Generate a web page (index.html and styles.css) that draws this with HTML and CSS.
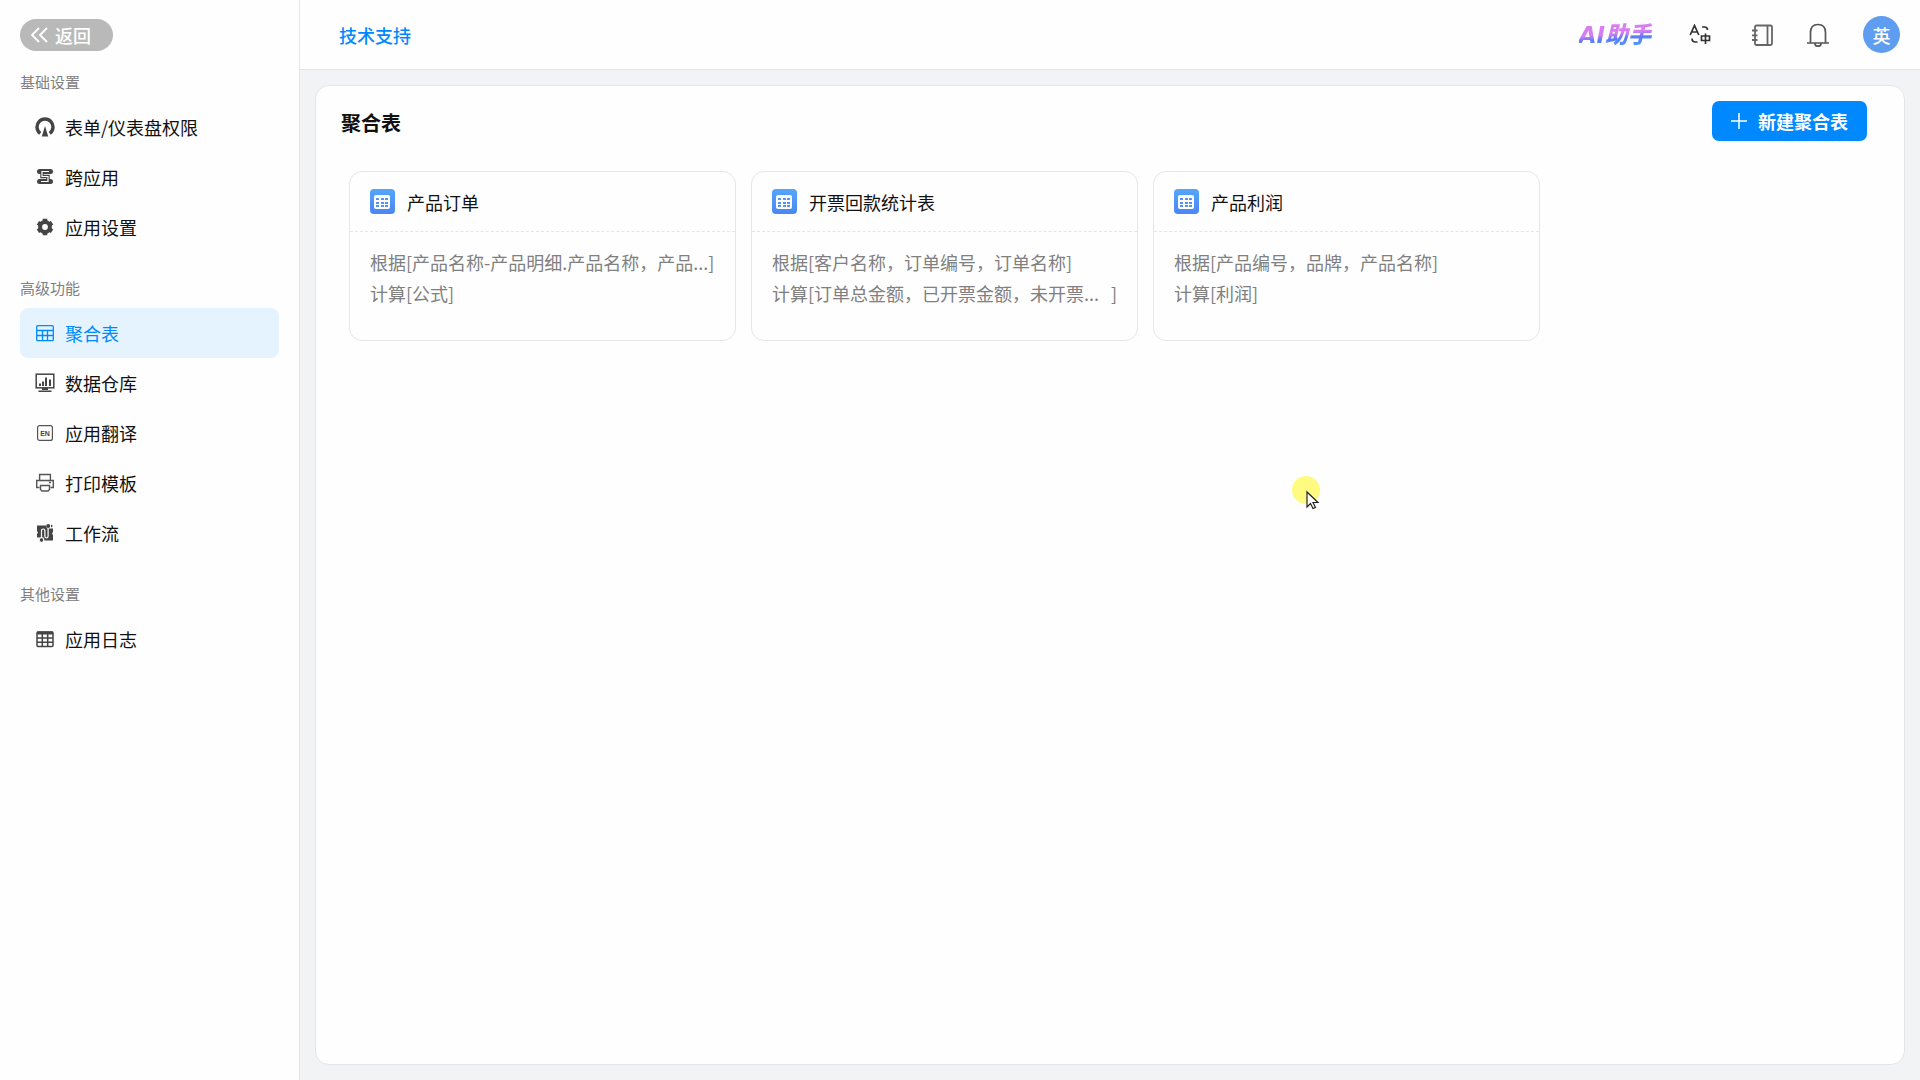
FILE: index.html
```html
<!DOCTYPE html>
<html lang="zh-CN">
<head>
  <meta charset="UTF-8">
  <title>聚合表</title>
  <meta name="viewport" content="width=device-width, initial-scale=1.0" />
  <link rel="stylesheet" href="styles.css">
</head>
<body>
  <!-- shared table icon for the cards -->
  <svg class="defs" width="0" height="0">
    <defs>
      <linearGradient id="blue" x1="0" y1="0" x2="0" y2="1">
        <stop offset="0" stop-color="#54a6fb" />
        <stop offset="1" stop-color="#4a86f5" />
      </linearGradient>
      <symbol id="tableIcon" viewBox="0 0 25 25">
        <rect width="25" height="25" rx="4" fill="url(#blue)" />
        <rect x="4" y="6" width="16" height="14" rx="2" fill="#fff" />
        <path d="M6 9h3v2H6zM11 9h3v2h-3zM15 9h3v2h-3zM6 13h3v2H6zM11 13h3v2h-3zM15 13h3v2h-3zM6 16h3v2H6zM11 16h3v2h-3zM15 16h3v2h-3z" fill="#4f96f8" />
      </symbol>
    </defs>
  </svg>

  <aside class="sidebar">
    <button class="back" type="button">
      <svg width="17" height="16" viewBox="0 0 17 16" fill="none" stroke="#fff" stroke-width="1.8"><path d="M8 1L1 8l7 7M16 1L9 8l7 7" /></svg>
      返回
    </button>

    <nav>
      <h2>基础设置</h2>
      <a class="item" href="#">
        <svg width="20" height="20" viewBox="0 0 20 20"><path d="M5.2 16.4A8 8 0 1 1 14.8 16.4" fill="none" stroke="#444" stroke-width="3.4" /><path d="M10 9l3.2 10.500H6.800z" fill="#444" /></svg>
        表单/仪表盘权限
      </a>
      <a class="item" href="#">
        <svg width="20" height="20" viewBox="0 0 20 20" fill="none"><path d="M4.500 4.500h11M4.500 14.500h11" stroke="#444" stroke-width="5" stroke-linecap="round" /><path d="M7 4.500v5h6v5" stroke="#444" stroke-width="3.500" /><path d="M14 4.500H7v5h6v5H6" stroke="#fff" stroke-width="1.200" /></svg>
        跨应用
      </a>
      <a class="item" href="#">
        <svg width="20" height="20" viewBox="0 0 20 20"><circle cx="10" cy="10" r="4.900" fill="none" stroke="#444" stroke-width="4" /><path d="M10 1.800v3M10 15.200v3M2.900 5.900l2.600 1.500M14.500 12.600l2.600 1.500M2.900 14.100l2.600-1.500M14.500 7.400l2.600-1.500" stroke="#444" stroke-width="4.500" /></svg>
        应用设置
      </a>

      <h2>高级功能</h2>
      <a class="item active" href="#">
        <svg width="20" height="20" viewBox="0 0 20 20" fill="none" stroke="#0089ff" stroke-width="1.300"><rect x="1.700" y="2.700" width="16.600" height="15" rx="1" /><path d="M2 7.500h16M2 12.500h16M7.500 7.500v10M12.500 7.500v10" /></svg>
        聚合表
      </a>
      <a class="item" href="#">
        <svg width="20" height="20" viewBox="0 0 20 20" fill="#444"><rect x="1.200" y="1.200" width="17.600" height="13.600" fill="none" stroke="#444" stroke-width="1.500" /><path d="M4 10.500h2V13H4zM7 8.500h2V13H7zM10 4.500h2V13h-2zM14 6.500h2V13h-2zM7 15h6v2H7zM3.500 17.500h13V19h-13z" /></svg>
        数据仓库
      </a>
      <a class="item" href="#">
        <svg width="20" height="20" viewBox="0 0 20 20"><rect x="2.600" y="2.600" width="14.800" height="14.800" rx="2" fill="none" stroke="#555" stroke-width="1.200" /><text class="en" x="10" y="13" text-anchor="middle">EN</text></svg>
        应用翻译
      </a>
      <a class="item" href="#">
        <svg width="20" height="20" viewBox="0 0 20 20" fill="none" stroke="#555" stroke-width="1.400"><path d="M4.600 7.500v-6h10.800v6M4.500 14.500H1.700v-7h16.600v7h-2.800M14 9.500h2" /><path d="M5.500 12.500h9v4l-1.500 1.500H7l-1.500-1.500z" /></svg>
        打印模板
      </a>
      <a class="item" href="#">
        <svg width="20" height="20" viewBox="0 0 20 20"><path d="M2 2.500h9l1 3h6v3.500l-1 1.500 1 1.500v5.500H9.500l-1-3H2V11l1-1.500L2 8z" fill="#444" /><path d="M6.500 15V8q0-2 1.700-2t1.700 2v5q0 2 1.600 2t1.600-2V5" fill="none" stroke="#fff" stroke-width="1.200" /><circle cx="13.200" cy="3" r="2" fill="#444" /><path d="M16 1.500l2 1.500-2 1.500z" fill="#444" /><circle cx="6.500" cy="17" r="2.300" fill="#444" stroke="#fff" /></svg>
        工作流
      </a>

      <h2>其他设置</h2>
      <a class="item" href="#">
        <svg width="20" height="20" viewBox="0 0 20 20" fill="none" stroke="#444" stroke-width="1.500"><rect x="2" y="3" width="16" height="14.500" rx="1" /><path d="M2 4h16" stroke-width="3" /><path d="M2 9h16M2 13.200h16M7.300 5v12M12.700 5v12" /></svg>
        应用日志
      </a>
    </nav>
  </aside>

  <div class="main">
    <header class="topbar">
      <a class="support" href="#">技术支持</a>
      <div class="tools">
        <a class="ai" href="#">AI助手</a>
        <button class="tool lang" type="button" aria-label="切换语言">
          <svg width="22" height="22" viewBox="0 0 22 22" fill="none" stroke="#333" stroke-width="1.700"><path d="M1.200 11L5.500 1.500 9.800 11M3 8h5M13 3h2.500q3 0 3 3M3 14.500q0 3.500 3.500 3.500h2M12.500 12h8v4.500h-8zM16.500 9.500V20" /></svg>
        </button>
        <button class="tool book" type="button" aria-label="通讯录">
          <svg width="22" height="22" viewBox="0 0 22 22" fill="none" stroke="#666" stroke-width="1.800"><rect x="4" y="1.500" width="17" height="19.500" rx="1.500" /><path d="M16.500 1.500V21M1 6.500h5.500M1 11.300h5.500M1 16h5.500" /></svg>
        </button>
        <button class="tool bell" type="button" aria-label="消息">
          <svg width="24" height="24" viewBox="0 0 24 24" fill="none" stroke="#555" stroke-width="1.700"><path d="M4.500 20V9.500Q4.500 1.500 12 1.500t7.500 8V20M1 20h22M9 20.500q0 2.700 3 2.700t3-2.700" /></svg>
        </button>
        <button class="avatar" type="button">英</button>
      </div>
    </header>

    <main class="panel">
      <div class="panel-head">
        <h1>聚合表</h1>
        <button class="create" type="button">
          <svg width="16" height="16" viewBox="0 0 16 16" stroke="#fff" stroke-width="1.500"><path d="M8 0v16M0 8h16" /></svg>
          新建聚合表
        </button>
      </div>

      <div class="cards">
        <section class="card">
          <h3><svg width="25" height="25"><use href="#tableIcon" /></svg>产品订单</h3>
          <p>根据[产品名称-产品明细.产品名称，产品...]</p>
          <p>计算[公式]</p>
        </section>
        <section class="card">
          <h3><svg width="25" height="25"><use href="#tableIcon" /></svg>开票回款统计表</h3>
          <p>根据[客户名称，订单编号，订单名称]</p>
          <p>计算[订单总金额，已开票金额，未开票...<span class="end">]</span></p>
        </section>
        <section class="card">
          <h3><svg width="25" height="25"><use href="#tableIcon" /></svg>产品利润</h3>
          <p>根据[产品编号，品牌，产品名称]</p>
          <p>计算[利润]</p>
        </section>
      </div>
    </main>
  </div>

  <!-- mouse pointer with highlight -->
  <svg class="pointer" width="32" height="36" viewBox="0 0 32 36">
    <circle cx="14" cy="14" r="14" fill="#fffa80" />
    <path d="M15 16v15l3.500-3.500 2.500 5 2.500-1-2.500-5h5z" fill="#fff" stroke="#222" stroke-width="1.200" />
  </svg>
</body>
</html>
```
FILE: styles.css
```css
* { box-sizing: border-box; }
body { margin: 0; display: flex; min-height: 100vh; background: #f1f3f5; color: #111; font-family: "Noto Sans CJK SC", sans-serif; font-size: 18px; }
a { color: inherit; text-decoration: none; }
button { border: 0; padding: 0; font: inherit; color: #fff; cursor: pointer; }
svg { flex: none; }
h1, h2, h3, p { margin: 0; }
.defs { position: absolute; }

/* left menu */
.sidebar { flex: none; width: 300px; padding: 19px 20px; background: #fefefe; border-right: 1px solid #e3e5e7; }
.back { display: flex; align-items: center; gap: 7px; width: 93px; height: 32px; padding-left: 11px; margin-bottom: 20px; border-radius: 16px; background: #b9b9b9; font-weight: 500; }
.sidebar h2 { padding-top: 25px; padding-bottom: 9px; font-size: 15px; line-height: 22px; font-weight: 400; color: #808080; }
.sidebar h2:first-child { padding-top: 0; }
.item { display: flex; align-items: center; gap: 10px; height: 50px; padding: 0 15px; border-radius: 8px; }
.item.active { background: #e5f3ff; color: #0089ff; }
.en { font-family: "Liberation Sans", sans-serif; font-size: 7px; font-weight: bold; fill: #444; }

/* top bar */
.main { flex: 1; display: flex; flex-direction: column; min-width: 0; }
.topbar { display: flex; align-items: center; justify-content: space-between; height: 70px; padding: 0 20px 0 39px; background: #fefefe; border-bottom: 1px solid #e3e5e7; }
.support { color: #0089ff; font-weight: 500; }
.tools { display: flex; align-items: center; }
.ai { padding-right: 3px; font-family: "DejaVu Sans", "Noto Sans CJK SC", sans-serif; font-size: 23px; line-height: 30px; font-weight: 900; font-style: italic; background: linear-gradient(175deg, #d77df0 45%, #5b7cfa 60%, #4da6f0 90%); background-clip: text; -webkit-background-clip: text; color: transparent; }
.tool { display: flex; background: none; }
.lang { margin-left: 35px; }
.book { margin-left: 40px; }
.bell { margin-left: 33px; }
.avatar { width: 37px; height: 37px; margin-left: 33px; border-radius: 50%; background: #5e9df0; font-weight: 500; }

/* content */
.panel { flex: 1; margin: 15px; background: #fefefe; border: 1px solid #e3e5e7; border-radius: 14px; }
.panel-head { display: flex; align-items: center; justify-content: space-between; padding: 15px 37px 30px 25px; }
.panel-head h1 { padding-top: 3px; font-size: 20px; line-height: 30px; font-weight: 700; }
.create { display: flex; align-items: center; justify-content: center; gap: 11px; width: 155px; height: 40px; border-radius: 7px; background: #0089ff; font-weight: 700; }
.cards { display: flex; flex-wrap: wrap; gap: 15px; padding: 0 7px 0 33px; }
.card { width: 25%; height: 170px; border: 1px solid #e5e6e8; border-radius: 13px; }
.card h3 { display: flex; align-items: center; gap: 12px; height: 60px; padding: 0 20px; margin-bottom: 15px; border-bottom: 1px dashed #e3e5e7; font-size: 18px; font-weight: 400; }
.card p { padding: 0 20px; line-height: 31px; color: #808080; white-space: nowrap; }
.end { padding-left: 12px; }

.pointer { position: absolute; left: 1292px; top: 476px; pointer-events: none; }
```
